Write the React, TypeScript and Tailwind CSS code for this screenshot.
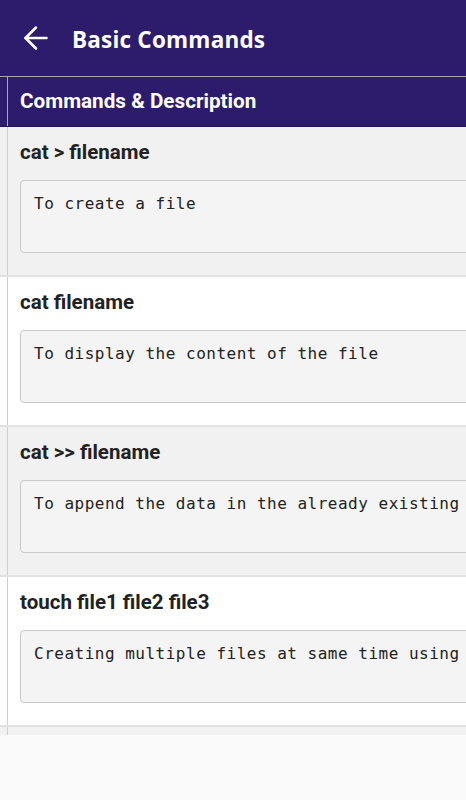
import { ReactNode } from "react";

interface Command {
  cmd: string;
  desc: string;
}

const commands: Command[] = [
  { cmd: "cat > filename", desc: "To create a file" },
  { cmd: "cat filename", desc: "To display the content of the file" },
  { cmd: "cat >> filename", desc: "To append the data in the already existing file" },
  { cmd: "touch file1 file2 file3", desc: "Creating multiple files at same time using touch command" },
  { cmd: "rm filename", desc: "To remove a file" },
];

const mono = { fontFamily: '"DejaVu Sans Mono", "Liberation Mono", monospace' };

function Row({ odd, children }: { odd: boolean; children: ReactNode }) {
  return (
    <div className={`flex border-b-2 border-[#e2e2e2] ${odd ? "bg-[#f1f1f1]" : "bg-white"}`}>
      <div className="w-2 shrink-0 border-r border-[#cfcfcf]" />
      <div className="w-[760px] shrink-0 pl-3 pt-[13px] pb-[22px]">{children}</div>
    </div>
  );
}

export default function App() {
  return (
    <div
      className="h-[800px] w-[466px] overflow-hidden bg-[#fafafa]"
      style={{ fontFamily: 'Roboto, "Liberation Sans", sans-serif' }}
    >
      <header className="flex h-[76px] items-center bg-[#2d1b6b] text-white">
        <svg
          viewBox="0 0 24 24"
          width={36}
          height={36}
          fill="none"
          stroke="currentColor"
          strokeWidth={1.7}
          strokeLinecap="round"
          strokeLinejoin="round"
          className="ml-[18px] shrink-0"
        >
          <path d="M19 12H5" />
          <path d="M12 19l-7-7 7-7" />
        </svg>
        <h1
          className="ml-[18px] mt-[3px] text-[22.5px] font-bold tracking-[0.2px]"
          style={{ fontFamily: '"Open Sans", Lato, sans-serif' }}
        >
          Basic Commands
        </h1>
      </header>

      <div className="h-[659px] overflow-hidden border-t border-[#a9a9a9]">
        <div className="flex h-[50px] border-b border-[#241456] bg-[#2d1b6b]">
          <div className="w-2 shrink-0 border-r border-[#a9a9a9]" />
          <div className="flex items-center pl-3 text-[20.7px] font-bold text-white">
            Commands &amp; Description
          </div>
        </div>
        {commands.map((c, i) => (
          <Row key={c.cmd} odd={i % 2 === 0}>
            <div className="h-6 text-[20.5px] font-bold leading-6 text-[#222]">{c.cmd}</div>
            <div
              className="mt-4 h-[73px] whitespace-nowrap rounded border border-[#c9c9c9] bg-[#f4f4f4] pl-[13px] pt-[11px] text-[16px] leading-6 tracking-[0.5px] text-[#222]"
              style={mono}
            >
              {c.desc}
            </div>
          </Row>
        ))}
      </div>
    </div>
  );
}
